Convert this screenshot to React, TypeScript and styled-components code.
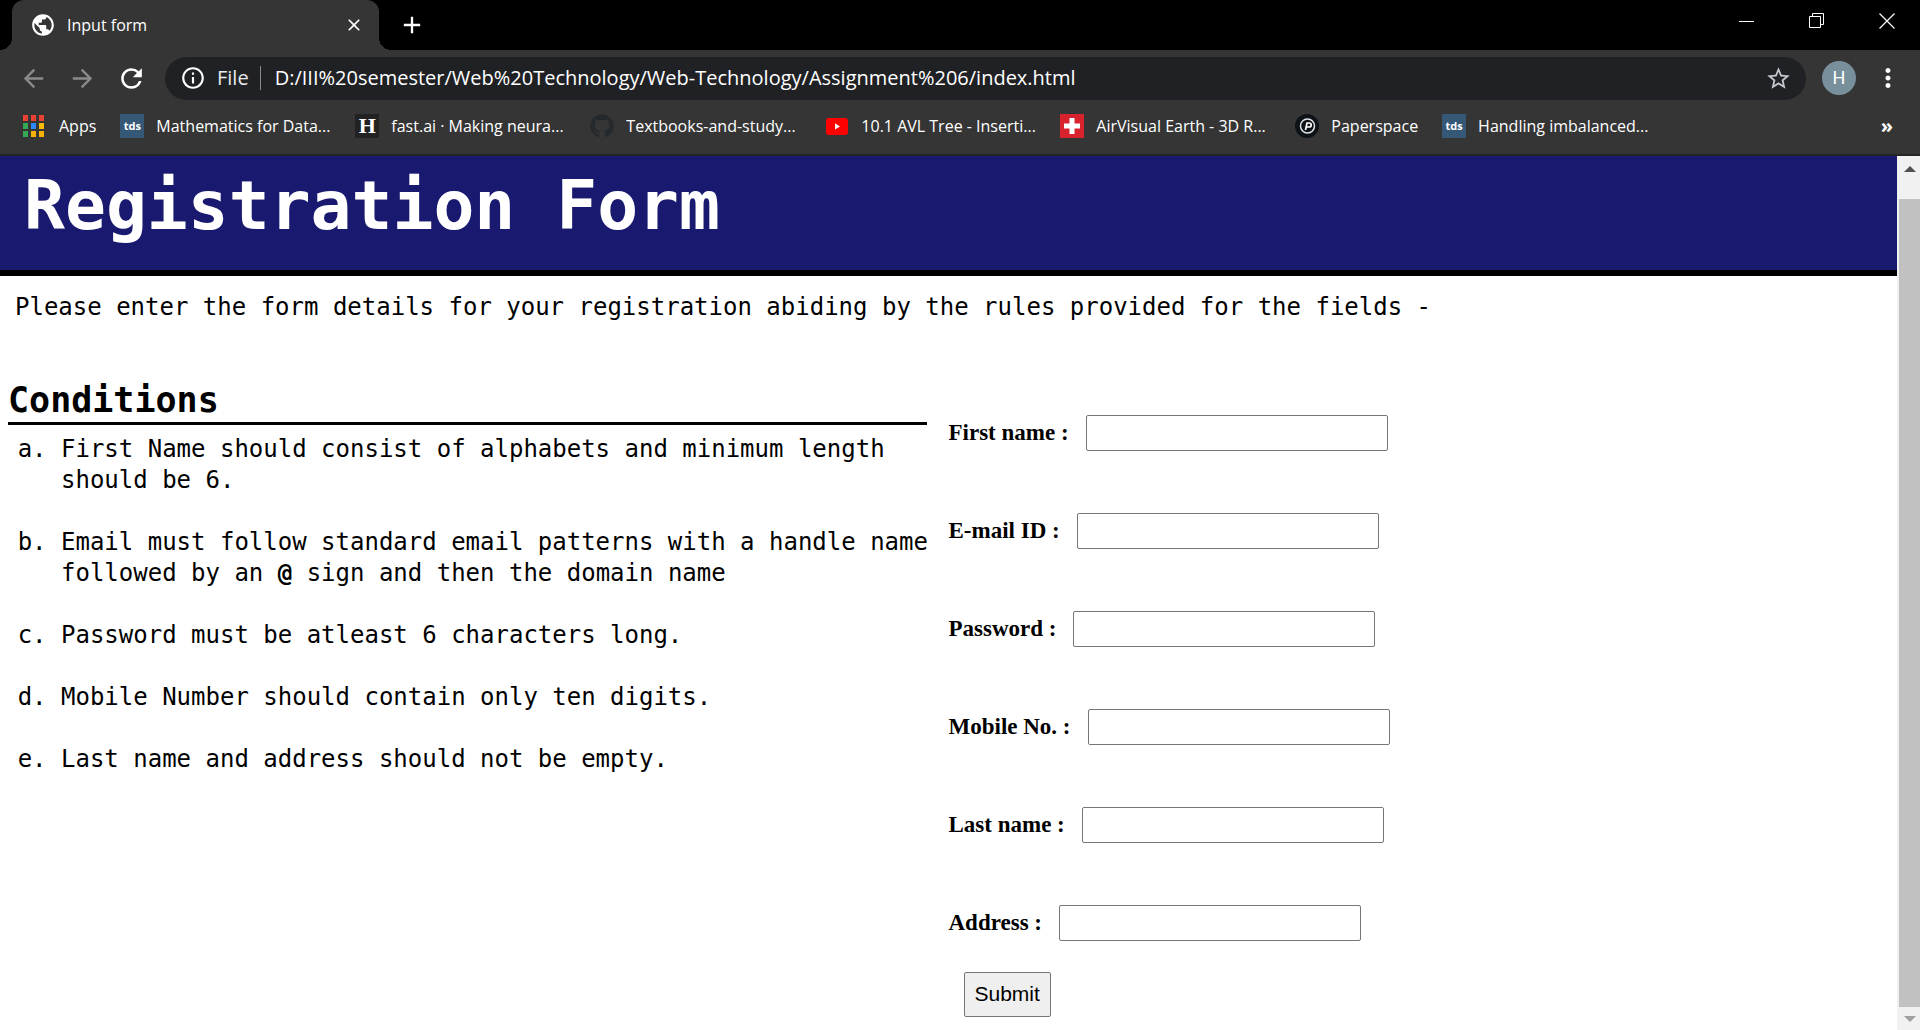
import React from "react";
import styled, { createGlobalStyle } from "styled-components";
import {
  MdPublic, MdArrowBack, MdArrowForward, MdRefresh, MdInfoOutline, MdStarBorder, MdClose, MdAdd, MdMoreVert,
} from "react-icons/md";
import { FaGithub } from "react-icons/fa";

const ui = `"Open Sans", "Noto Sans", sans-serif`;
const mono = `"DejaVu Sans Mono", "Liberation Mono", monospace`;

const GlobalStyle = createGlobalStyle`
  *, *::before, *::after { box-sizing: border-box; }
  body { margin: 0; background: #fff; color: #000; }
  button, input { font: inherit; color: inherit; }
  h1, h2, p, ol { margin: 0; }
`;

const Window = styled.div`
  display: flex;
  flex-direction: column;
  height: 100vh;
  overflow: hidden;
`;

const IconButton = styled.button<{ $size?: number; $dim?: boolean }>`
  display: grid;
  place-items: center;
  flex: none;
  width: ${(p) => p.$size ?? 24}px;
  height: ${(p) => p.$size ?? 24}px;
  padding: 0;
  border: 0;
  background: none;
  color: ${(p) => (p.$dim ? "#8a8a8a" : "#fff")};
  svg { display: block; flex: none; }
`;

/* ---- tab strip ---- */
const TabStrip = styled.div`
  display: flex;
  align-items: stretch;
  height: 50px;
  padding-left: 12px;
  background: #000;
`;

const Tab = styled.div`
  position: relative;
  display: flex;
  align-items: center;
  gap: 11px;
  width: 367px;
  padding: 0 14px 0 18px;
  border-radius: 12px 12px 0 0;
  background: #353535;
  color: #fff;
  font: 16px/24px ${ui};
  &::before, &::after {
    content: "";
    position: absolute;
    bottom: 0;
    width: 12px;
    height: 12px;
  }
  &::before { left: -12px; background: radial-gradient(circle at 0 0, #000 12px, #353535 12px); }
  &::after { right: -12px; background: radial-gradient(circle at 100% 0, #000 12px, #353535 12px); }
`;

const TabTitle = styled.span`
  flex: 1;
`;

const NewTab = styled.div`
  display: flex;
  align-items: center;
  padding-left: 19px;
`;

const WindowControls = styled.div`
  display: flex;
  gap: 46px;
  margin-left: auto;
  padding: 9px 21px 0 0;
`;

/* ---- toolbar ---- */
const Toolbar = styled.div`
  display: flex;
  align-items: center;
  height: 56px;
  padding: 0 16px 0 18px;
  background: #353535;
`;

const NavButtons = styled.div`
  display: flex;
  gap: 18px;
  margin-right: 18px;
`;

const AddressBar = styled.div`
  display: flex;
  flex: 1;
  align-items: center;
  height: 43px;
  padding: 0 14px 0 15px;
  border-radius: 22px;
  background: #202124;
  color: #fff;
  font: 20px/28px ${ui};
`;

const Scheme = styled.span`
  margin: 0 11px;
  color: #e8eaed;
`;

const Divider = styled.span`
  width: 1px;
  height: 24px;
  margin-right: 14px;
  background: #8a8a8a;
`;

const Url = styled.input`
  flex: 1;
  min-width: 0;
  padding: 0;
  border: 0;
  outline: 0;
  background: none;
`;

const Avatar = styled.button`
  width: 34px;
  height: 34px;
  margin: 0 16px;
  padding: 0;
  border: 0;
  border-radius: 50%;
  background: #78909c;
  color: #fff;
  font: 18px/34px Roboto, sans-serif;
`;

/* ---- bookmarks ---- */
const Bookmarks = styled.nav`
  display: flex;
  align-items: center;
  height: 50px;
  padding: 0 27px 8px 23px;
  border-bottom: 2px solid #242424;
  background: #353535;
  color: #fff;
  font: 16px/24px ${ui};
`;

const Bookmark = styled.a<{ $long?: boolean }>`
  display: flex;
  flex: none;
  align-items: center;
  gap: 12px;
  width: ${(p) => (p.$long ? "211px" : "auto")};
  margin-right: 24px;
  color: inherit;
  text-decoration: none;
  white-space: nowrap;
  svg { display: block; flex: none; }
`;

const Favicon = styled.span<{ $bg: string; $serif?: boolean }>`
  display: grid;
  flex: none;
  place-items: center;
  width: 24px;
  height: 24px;
  background: ${(p) => p.$bg};
  font: ${(p) => (p.$serif ? `bold 22px/24px "Liberation Serif", serif` : `bold 11px/22px ${ui}`)};
`;

const More = styled.button`
  margin-left: auto;
  padding: 0;
  border: 0;
  background: none;
  font: bold 20px/24px ${ui};
`;

/* ---- page ---- */
const Viewport = styled.div`
  display: flex;
  flex: 1;
  min-height: 0;
`;

const Page = styled.main`
  flex: 1;
  min-width: 0;
  overflow: hidden;
`;

const Banner = styled.header`
  padding: 10px 24px 24px;
  border-bottom: 6px solid #000;
  background: #191970;
  color: #fff;
`;

const Title = styled.h1`
  font: bold 68px/80px ${mono};
`;

const Intro = styled.p`
  padding: 16px 15px 0;
  font: 24px/31px ${mono};
`;

const Columns = styled.div`
  display: grid;
  grid-template-columns: 1fr 1fr;
  padding-top: 56px;
`;

const Rules = styled.section`
  padding: 1px 8px 0;
`;

const RulesTitle = styled.h2`
  margin: 0 14px 9px 0;
  padding-bottom: 1px;
  border-bottom: 3px solid #000;
  font: bold 35px/41px ${mono};
`;

const RuleList = styled.ol`
  display: grid;
  gap: 31px;
  padding-left: 53px;
  list-style: lower-alpha;
  font: 24px/31px ${mono};
`;

const Form = styled.form`
  display: flex;
  flex-direction: column;
  align-items: flex-start;
  padding-top: 36px;
  font: bold 23px/36px "Liberation Serif", "Times New Roman", serif;
`;

const Field = styled.div`
  display: flex;
  align-items: center;
  gap: 17px;
  margin-bottom: 62px;
  &:last-of-type { margin-bottom: 31px; }
`;

const TextBox = styled.input`
  width: 302px;
  height: 36px;
  padding: 1px 2px;
  border: 1px solid #767676;
  border-radius: 2px;
  background: #fff;
`;

const Submit = styled.button`
  height: 45px;
  margin-left: 15px;
  padding: 0 10px 2px;
  border: 1px solid #767676;
  border-radius: 2px;
  background: #efefef;
  font: 21px/28px "Liberation Sans", Arial, sans-serif;
`;

/* ---- scrollbar ---- */
const Scrollbar = styled.div`
  display: flex;
  flex: none;
  flex-direction: column;
  align-items: center;
  width: 23px;
  padding: 10px 0 8px 2px;
  background: #f1f1f1;
`;

const Thumb = styled.div`
  flex: 1;
  width: 100%;
  margin: 27px 0 9px;
  background: #c1c1c1;
`;

const Arrow = styled.span<{ $down?: boolean }>`
  width: 0;
  height: 0;
  border: solid transparent;
  border-width: ${(p) => (p.$down ? "6px 6px 0" : "0 6px 6px")};
  border-top-color: ${(p) => (p.$down ? "#a0a0a0" : "transparent")};
  border-bottom-color: ${(p) => (p.$down ? "transparent" : "#505050")};
`;

const gridColors = ["#ea4335", "#ea4335", "#ea4335", "#34a853", "#2b8af5", "#fbbc05", "#34a853", "#fbb005", "#fbb005"];

const AppsIcon = () => (
  <svg width="24" height="24" viewBox="0 0 24 24" aria-hidden="true">
    {gridColors.map((c, i) => (
      <rect key={i} x={(i % 3) * 8} y={1 + Math.floor(i / 3) * 8} width="5" height="6" fill={c} />
    ))}
  </svg>
);

const YouTubeIcon = () => (
  <svg width="24" height="24" viewBox="0 0 24 24" aria-hidden="true">
    <rect x="1" y="4" width="22" height="17" rx="3" fill="#f00" />
    <path d="M10 9.2v6.4l5-3.2z" fill="#fff" />
  </svg>
);

const CrossIcon = () => (
  <svg width="24" height="24" viewBox="0 0 24 24" aria-hidden="true">
    <rect width="24" height="24" fill="#d8232e" />
    <path d="M9.5 4h5v5.500H20v5h-5.500V20h-5v-5.500H4v-5h5.500z" fill="#fff" />
  </svg>
);

const PaperspaceIcon = () => (
  <svg width="24" height="24" viewBox="0 0 24 24" aria-hidden="true">
    <circle cx="12" cy="12" r="12" fill="#0e1318" />
    <circle cx="12.500" cy="12" r="7" fill="none" stroke="#dfe3e6" strokeWidth="1.500" />
    <path d="M10.500 16l1.500-7h2.200a1.900 1.900 0 0 1 0 4h-2.800" fill="none" stroke="#fff" strokeWidth="1.700" />
  </svg>
);

const bookmarks: { label: string; icon: React.ReactNode; long?: boolean }[] = [
  { label: "Mathematics for Data...", icon: <Favicon $bg="#355876">tds</Favicon>, long: true },
  { label: "fast.ai · Making neura...", icon: <Favicon $bg="#222" $serif>H</Favicon>, long: true },
  { label: "Textbooks-and-study...", icon: <FaGithub size={24} color="#24292e" />, long: true },
  { label: "10.1 AVL Tree - Inserti...", icon: <YouTubeIcon />, long: true },
  { label: "AirVisual Earth - 3D R...", icon: <CrossIcon />, long: true },
  { label: "Paperspace", icon: <PaperspaceIcon /> },
  { label: "Handling imbalanced...", icon: <Favicon $bg="#355876">tds</Favicon>, long: true },
];

const fields = [
  { id: "first", label: "First name :", type: "text" },
  { id: "email", label: "E-mail ID :", type: "email" },
  { id: "password", label: "Password :", type: "password" },
  { id: "mobile", label: "Mobile No. :", type: "tel" },
  { id: "last", label: "Last name :", type: "text" },
  { id: "address", label: "Address :", type: "text" },
];

export default function App() {
  return (
    <Window>
      <GlobalStyle />
      <TabStrip>
        <Tab>
          <MdPublic size={26} />
          <TabTitle>Input form</TabTitle>
          <IconButton aria-label="Close tab" $size={22}><MdClose size={20} /></IconButton>
        </Tab>
        <NewTab>
          <IconButton aria-label="New tab" $size={28}><MdAdd size={28} /></IconButton>
        </NewTab>
        <WindowControls>
          <IconButton aria-label="Minimize">
            <svg width="16" height="16" viewBox="0 0 16 16"><path d="M0 8.500h15" stroke="#fff" /></svg>
          </IconButton>
          <IconButton aria-label="Restore">
            <svg width="16" height="16" viewBox="0 0 16 16" fill="none" stroke="#fff">
              <path d="M.5 3.500h11v11H.5zM3.500 3.500v-3h11v11h-3" />
            </svg>
          </IconButton>
          <IconButton aria-label="Close">
            <svg width="16" height="16" viewBox="0 0 16 16"><path d="M.5.5l15 15M15.500.5l-15 15" stroke="#fff" strokeWidth="1.200" /></svg>
          </IconButton>
        </WindowControls>
      </TabStrip>

      <Toolbar>
        <NavButtons>
          <IconButton aria-label="Back" $size={31} $dim><MdArrowBack size={29} /></IconButton>
          <IconButton aria-label="Forward" $size={31} $dim><MdArrowForward size={29} /></IconButton>
          <IconButton aria-label="Reload" $size={31}><MdRefresh size={31} /></IconButton>
        </NavButtons>
        <AddressBar>
          <MdInfoOutline size={26} />
          <Scheme>File</Scheme>
          <Divider />
          <Url aria-label="Address" type="text" defaultValue="D:/III%20semester/Web%20Technology/Web-Technology/Assignment%206/index.html" />
          <IconButton aria-label="Bookmark this page" $size={28}><MdStarBorder size={27} color="#c4c7cb" /></IconButton>
        </AddressBar>
        <Avatar aria-label="Profile H">H</Avatar>
        <IconButton aria-label="Menu" $size={32}><MdMoreVert size={30} /></IconButton>
      </Toolbar>

      <Bookmarks aria-label="Bookmarks">
        <Bookmark href="#"><AppsIcon />Apps</Bookmark>
        {bookmarks.map((b) => (
          <Bookmark key={b.label} href="#" $long={b.long}>{b.icon}{b.label}</Bookmark>
        ))}
        <More aria-label="More bookmarks">»</More>
      </Bookmarks>

      <Viewport>
        <Page>
          <Banner><Title>Registration Form</Title></Banner>
          <Intro>Please enter the form details for your registration abiding by the rules provided for the fields -</Intro>
          <Columns>
            <Rules>
              <RulesTitle>Conditions</RulesTitle>
              <RuleList>
                <li>First Name should consist of alphabets and minimum length should be 6.</li>
                <li>Email must follow standard email patterns with a handle name followed by an <b>@</b> sign and then the domain name</li>
                <li>Password must be atleast 6 characters long.</li>
                <li>Mobile Number should contain only ten digits.</li>
                <li>Last name and address should not be empty.</li>
              </RuleList>
            </Rules>
            <Form onSubmit={(e) => e.preventDefault()}>
              {fields.map((f) => (
                <Field key={f.id}>
                  <label htmlFor={f.id}>{f.label}</label>
                  <TextBox id={f.id} type={f.type} />
                </Field>
              ))}
              <Submit type="submit">Submit</Submit>
            </Form>
          </Columns>
        </Page>
        <Scrollbar aria-hidden="true">
          <Arrow />
          <Thumb />
          <Arrow $down />
        </Scrollbar>
      </Viewport>
    </Window>
  );
}
